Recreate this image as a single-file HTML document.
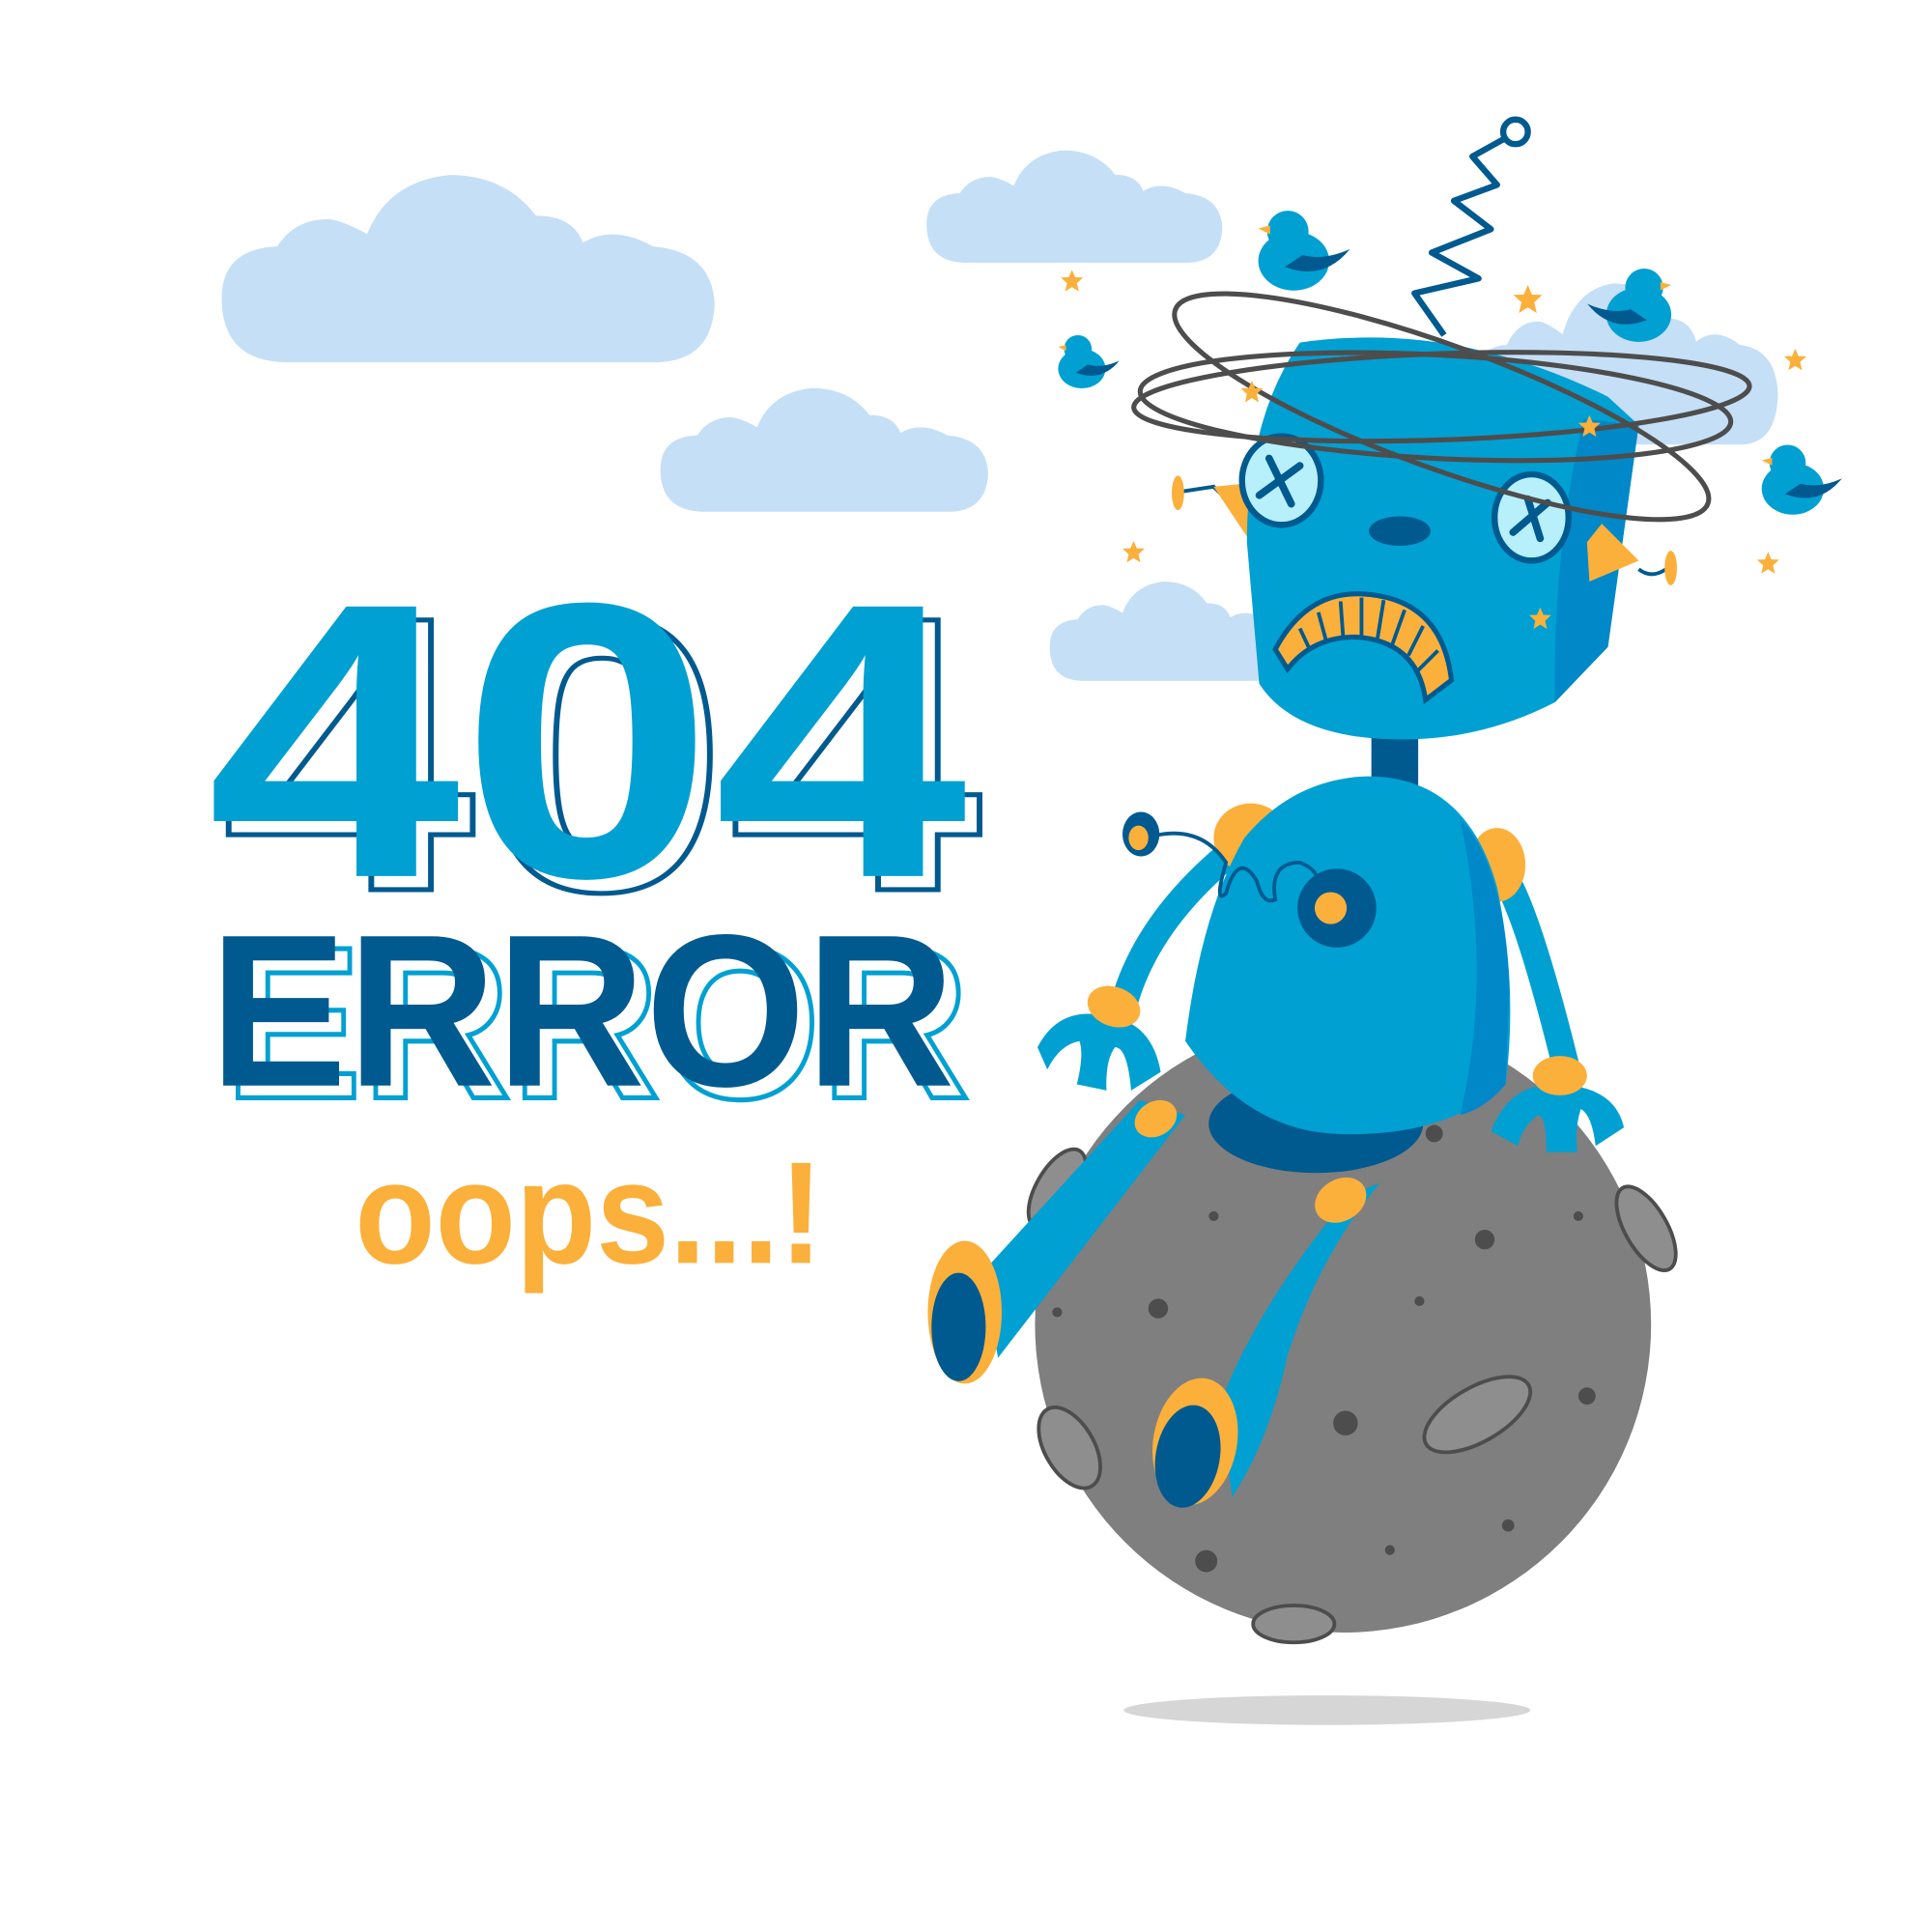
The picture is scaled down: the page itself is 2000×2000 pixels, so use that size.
<!DOCTYPE html>
<html><head><meta charset="utf-8"><style>html,body{margin:0;padding:0;background:#fff}svg{display:block}</style></head>
<body>
<svg width="2000" height="2000" viewBox="0 0 1568 1568" xmlns="http://www.w3.org/2000/svg">
<defs>
<g id="cloud"><path d="M0,100 Q0,60 45,58 Q60,35 88,36 Q100,38 118,48 Q135,5 185,0 Q230,0 255,33 Q285,33 293,55 Q318,40 350,58 Q398,62 400,105 Q398,150 355,152 L50,152 Q0,150 0,100Z" fill="#c5dff6"/></g>
<g id="star"><path d="M0,-9 L2.6,-3 9,-2.8 4,1.8 5.5,8.5 0,5 -5.5,8.5 -4,1.8 -9,-2.8 -2.6,-3Z" fill="#fbb03b"/></g>
<g id="bird"><ellipse cx="0" cy="14" rx="24" ry="20" fill="#00a0d2"/><circle cx="-4" cy="-6" r="14" fill="#00a0d2"/><path d="M-6,18 Q20,28 38,6 Q20,14 6,10Z" fill="#005a8f"/><path d="M-16,-4 L-24,-8 -16,-10Z" fill="#fbb03b"/></g>
</defs>
<use href="#cloud" transform="translate(180,142)"/>
<use href="#cloud" transform="translate(536,315) scale(0.665,0.66)"/>
<use href="#cloud" transform="translate(752,122) scale(0.6,0.6)"/>
<use href="#cloud" transform="translate(852,472) scale(0.5,0.53)"/>
<use href="#cloud" transform="translate(1195,230) scale(0.62,0.86)"/>

<g font-family="Liberation Sans, sans-serif" font-weight="bold">
<text x="180" y="722" font-size="318" textLength="617" lengthAdjust="spacingAndGlyphs" fill="#fff" stroke="#005a8f" stroke-width="4">404</text>
<text x="168" y="711" font-size="318" textLength="617" lengthAdjust="spacingAndGlyphs" fill="#00a0d2">404</text>
<text x="182" y="891" font-size="176" textLength="605" lengthAdjust="spacingAndGlyphs" fill="#fff" stroke="#00a0d2" stroke-width="4">ERROR</text>
<text x="170" y="881" font-size="176" textLength="605" lengthAdjust="spacingAndGlyphs" fill="#005a8f">ERROR</text>
<text x="288" y="1025" font-size="118" textLength="380" lengthAdjust="spacingAndGlyphs" fill="#fbb03b">oops...!</text>
</g>

<ellipse cx="1077" cy="1388" rx="165" ry="12" fill="#d6d6d6"/>
<circle cx="1090" cy="1075" r="250" fill="#7f7f7f"/>
<g fill="#4d4d4d"><circle cx="940" cy="1062" r="8"/><circle cx="1092" cy="1155" r="10"/><circle cx="979" cy="1267" r="9"/><circle cx="1205" cy="1006" r="8"/><circle cx="1288" cy="1133" r="7"/><circle cx="985" cy="987" r="4"/><circle cx="1152" cy="1056" r="4"/><circle cx="1128" cy="1258" r="4"/><circle cx="1224" cy="1238" r="5"/><circle cx="1281" cy="987" r="4"/><circle cx="858" cy="1065" r="4"/><circle cx="1164" cy="920" r="7"/></g>
<g fill="#8e8e8e" stroke="#4d4d4d" stroke-width="3">
<ellipse cx="1050" cy="1318" rx="33" ry="15"/><ellipse cx="1199" cy="1148" rx="48" ry="22" transform="rotate(-30 1199 1148)"/>
<ellipse cx="868" cy="1175" rx="20" ry="36" transform="rotate(-30 868 1175)"/><ellipse cx="1336" cy="997" rx="17" ry="38" transform="rotate(-30 1336 997)"/><ellipse cx="858" cy="965" rx="17" ry="36" transform="rotate(30 858 965)"/></g>

<!-- legs -->
<path d="M925,893 L962,905 L810,1102 L798,1032Z" fill="#00a0d2"/>
<ellipse cx="783" cy="1065" rx="30" ry="58" fill="#fbb03b"/><ellipse cx="778" cy="1077" rx="22" ry="44" fill="#005a8f"/>
<path d="M1095,970 Q1020,1060 990,1140 L1000,1215 Q1030,1170 1045,1100 Q1070,1020 1120,960Z" fill="#00a0d2"/>
<ellipse cx="970" cy="1170" rx="34" ry="52" fill="#fbb03b" transform="rotate(10 970 1170)"/><ellipse cx="964" cy="1182" rx="26" ry="42" fill="#005a8f" transform="rotate(10 964 1182)"/>
<ellipse cx="1088" cy="974" rx="22" ry="17" fill="#fbb03b" transform="rotate(-30 1088 974)"/>
<ellipse cx="938" cy="908" rx="18" ry="14" fill="#fbb03b" transform="rotate(-30 938 908)"/>

<!-- arms -->
<path d="M995,695 Q930,750 912,815" stroke="#00a0d2" stroke-width="22" fill="none" stroke-linecap="round"/>
<path d="M1220,710 Q1240,740 1272,870" stroke="#00a0d2" stroke-width="22" fill="none" stroke-linecap="round"/>
<ellipse cx="1015" cy="680" rx="30" ry="28" fill="#fbb03b"/><ellipse cx="1215" cy="702" rx="23" ry="30" fill="#fbb03b"/>
<path d="M842,850 Q860,815 900,825 Q935,830 942,870 L918,885 Q915,850 905,850 Q897,860 898,885 L874,880 Q880,855 876,845 Q860,848 850,868Z" fill="#00a0d2"/>
<ellipse cx="904" cy="817" rx="22" ry="16" fill="#fbb03b" transform="rotate(20 904 817)"/>
<path d="M1210,918 Q1225,880 1260,880 Q1310,880 1318,915 L1295,930 Q1292,905 1283,900 Q1278,915 1280,935 L1255,935 Q1255,905 1248,905 Q1235,915 1232,930Z" fill="#00a0d2"/>
<ellipse cx="1266" cy="873" rx="22" ry="16" fill="#fbb03b"/>

<!-- body -->
<rect x="1113" y="590" width="38" height="55" fill="#005a8f"/>
<ellipse cx="1068" cy="912" rx="87" ry="40" fill="#005a8f"/>
<path d="M1110,630 Q1190,630 1215,720 Q1232,800 1222,880 Q1170,925 1080,920 Q1010,915 962,845 Q975,740 1010,680 Q1050,632 1110,630Z" fill="#00a0d2"/>
<path d="M1185,665 Q1220,700 1225,800 L1222,880 Q1205,900 1185,905 Q1212,790 1185,665Z" fill="#0088c8"/>
<circle cx="1085" cy="737" r="32" fill="#005a8f"/><circle cx="1080" cy="737" r="13" fill="#fbb03b"/>
<path d="M938,678 Q975,670 995,700 Q985,735 995,725 Q1005,690 1020,715 Q1025,735 1035,730 Q1030,700 1055,700 Q1068,705 1070,715" stroke="#005a8f" stroke-width="3" fill="none"/>
<ellipse cx="926" cy="677" rx="15" ry="18" fill="#005a8f"/><ellipse cx="924" cy="680" rx="8" ry="10" fill="#fbb03b"/>

<!-- head -->
<path d="M952,400 L985,395 1010,420" stroke="#005a8f" stroke-width="3" fill="none"/>
<path d="M985,395 L1015,392 1015,440 Z" fill="#fbb03b"/>
<ellipse cx="956" cy="400" rx="5" ry="14" fill="#fbb03b"/>
<path d="M1055,278 Q1180,260 1305,322 L1330,345 L1305,525 L1262,570 Q1200,602 1130,600 Q1050,598 1022,555 L1012,440 Q1012,340 1055,278Z" fill="#00a0d2"/>
<path d="M1285,340 L1330,345 1305,525 1262,570 Q1260,450 1285,340Z" fill="#0088c8"/>
<path d="M1300,425 L1330,455 1290,472 1288,440Z" fill="#fbb03b"/>
<path d="M1330,462 Q1340,470 1352,462" stroke="#005a8f" stroke-width="3" fill="none"/><ellipse cx="1356" cy="461" rx="5" ry="14" fill="#fbb03b"/>
<g stroke="#005a8f" stroke-width="5"><ellipse cx="1040" cy="390" rx="32" ry="36" fill="#b7f0fb"/><ellipse cx="1243" cy="420" rx="30" ry="35" fill="#b7f0fb"/></g>
<g stroke="#005a8f" stroke-width="6" stroke-linecap="round"><path d="M1030,372 L1048,409 M1022,402 L1055,378 M1240,405 L1250,437 M1228,432 L1256,408"/></g>
<ellipse cx="1136" cy="431" rx="25" ry="12" fill="#005a8f"/>
<path d="M1035,527 Q1060,480 1105,482 Q1170,485 1178,552 L1157,568 Q1150,520 1100,517 Q1065,517 1045,543Z" fill="#fbb03b" stroke="#005a8f" stroke-width="4"/>
<g stroke="#005a8f" stroke-width="3"><path d="M1055,510 L1062,525 M1070,497 L1076,519 M1088,488 L1090,516 M1105,485 L1105,516 M1123,487 L1118,518 M1140,495 L1130,523 M1155,508 L1143,532 M1167,528 L1150,545"/></g>

<!-- antenna -->
<polyline points="1172,272 1148,238 1200,226 1162,205 1210,186 1180,163 1215,150 1195,127 1222,112" fill="none" stroke="#005a8f" stroke-width="5" stroke-linejoin="round"/>
<circle cx="1230" cy="107" r="10" fill="#fff" stroke="#005a8f" stroke-width="5"/>

<!-- orbits -->
<g fill="none" stroke="#4d4d4d" stroke-width="4">
<ellipse cx="1165" cy="330" rx="240" ry="42" transform="rotate(3 1165 330)"/>
<ellipse cx="1170" cy="322" rx="250" ry="35" transform="rotate(-2 1170 322)"/>
<ellipse cx="1170" cy="330" rx="230" ry="50" transform="rotate(20 1170 330)"/>
</g>

<!-- birds & stars -->
<use href="#bird" transform="translate(1050,195) scale(1.2)"/>
<use href="#bird" transform="translate(878,288) scale(0.8)"/>
<use href="#bird" transform="translate(1330,240) scale(1.1) scale(-1,1)"/>
<use href="#bird" transform="translate(1455,382) scale(1.05)"/>
<use href="#star" transform="translate(870,228)"/><use href="#star" transform="translate(920,448)"/><use href="#star" transform="translate(1240,243) scale(1.3)"/>
<use href="#star" transform="translate(1290,346)"/><use href="#star" transform="translate(1457,292)"/><use href="#star" transform="translate(1435,457)"/>
<use href="#star" transform="translate(1250,502)"/><use href="#star" transform="translate(1016,318)"/>
</svg>
</body></html>
